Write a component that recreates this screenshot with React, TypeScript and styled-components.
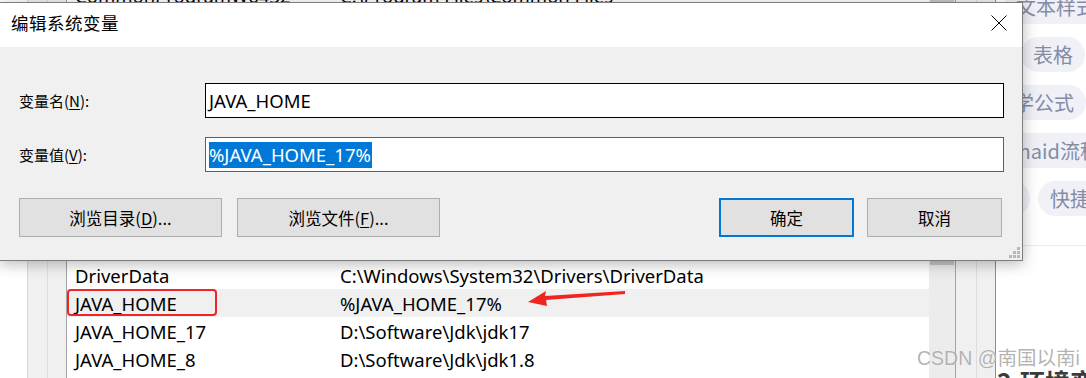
import React from "react";
import styled, { createGlobalStyle } from "styled-components";

const UI = `"Noto Sans", "Noto Sans CJK SC", sans-serif`;
const CJK = `"Noto Sans CJK SC", "Noto Sans", sans-serif`;

const GlobalStyle = createGlobalStyle`
  html, body { margin: 0; padding: 0; background: #ffffff; overflow: hidden; }
  body { font-family: ${UI}; }
  * { box-sizing: border-box; }
`;

const Screen = styled.div`
  position: relative;
  width: 1086px;
  height: 378px;
  overflow: hidden;
  display: flex;
  background: #ffffff;
`;

/* ---------- background window (environment variable list) ---------- */
const BackWindow = styled.div`
  flex: 0 0 996px;
  height: 100%;
  display: flex;
  background: #ffffff;
  border-right: 1px solid #8e8e8e;
`;

const Gutter = styled.div`
  flex: 0 0 27px;
  background: #ffffff;
`;

const FrameEdge = styled.div<{ $w: number; $line: string }>`
  flex: 0 0 ${(p) => p.$w}px;
  background: #f0f0f0;
  border-left: 1px solid ${(p) => p.$line};
`;

const ListBox = styled.div`
  flex: 0 0 863px;
  border-left: 1px solid #a3a3a3;
  background: #ffffff;
  display: flex;
  flex-direction: column;
  overflow: hidden;
`;

const ListRows = styled.div`
  margin-top: -19px;
  display: flex;
  flex-direction: column;
`;

const Row = styled.div<{ $active?: boolean }>`
  display: grid;
  grid-template-columns: 265px 1fr;
  height: 28px;
  align-items: center;
  background: ${(p) => (p.$active ? "#f0f0f0" : "transparent")};
  font-family: ${UI};
  font-size: 18.5px;
  color: #000;
  white-space: nowrap;
`;

const Cell = styled.div`
  position: relative;
  padding-left: 8px;
  height: 100%;
  display: flex;
  align-items: center;
`;

const RedBox = styled.div`
  position: absolute;
  left: 0;
  top: 0;
  width: 150px;
  height: 27px;
  border: 2px solid #f02424;
  border-radius: 4px;
`;

const Scrollbar = styled.div`
  flex: 0 0 26px;
  background: #ececec;
  display: flex;
  flex-direction: column;
`;

const Thumb = styled.div`
  height: 265px;
  margin: 0 1px;
  background: #c6c6c6;
`;

/* ---------- right CSDN sidebar ---------- */
const Sidebar = styled.div`
  flex: 1;
  display: flex;
  flex-direction: column;
  background: #ffffff;
  min-width: 0;
`;

const PillStack = styled.div`
  margin-top: -11px;
  display: flex;
  flex-direction: column;
  gap: 13px;
`;

const PillRow = styled.div<{ $overhang: number }>`
  display: flex;
  justify-content: flex-end;
  gap: 8px;
  height: 35px;
  margin-right: ${(p) => -p.$overhang}px;
`;

const Pill = styled.div`
  flex: 0 0 auto;
  height: 35px;
  padding: 0 12px;
  border-radius: 18px;
  background: #eff1f7;
  color: #858ba5;
  font-family: ${CJK};
  font-size: 20px;
  line-height: 35px;
  white-space: nowrap;
`;

const Divider = styled.div`
  margin-top: 29px;
  border-top: 1px solid #ececf0;
`;

const BottomTitle = styled.div`
  margin-top: auto;
  margin-bottom: -19px;
  padding-left: 1px;
  font-family: ${CJK};
  font-weight: 700;
  font-size: 25px;
  line-height: 32px;
  color: #3b3b3b;
  white-space: nowrap;
`;

/* ---------- overlays ---------- */
const Watermark = styled.div`
  position: absolute;
  left: 917px;
  top: 344px;
  font-family: "Liberation Sans", "Noto Sans CJK SC", sans-serif;
  font-size: 19.5px;
  line-height: 28px;
  color: rgba(150, 150, 150, 0.72);
  text-shadow: 0 0 1px rgba(255, 255, 255, 0.8);
  white-space: nowrap;
  z-index: 3;
`;

const Arrow = styled.svg`
  position: absolute;
  left: 524px;
  top: 284px;
  z-index: 1;
`;

/* ---------- dialog ---------- */
const Dialog = styled.div`
  position: absolute;
  left: -1px;
  top: 2px;
  width: 1024px;
  height: 259px;
  border: 1px solid #7d7d7d;
  background: #f0f0f0;
  box-shadow: 0 3px 14px rgba(0, 0, 0, 0.28);
  display: flex;
  flex-direction: column;
  z-index: 2;
`;

const TitleBar = styled.div`
  flex: 0 0 44px;
  background: #ffffff;
  display: flex;
  align-items: center;
  padding-left: 11px;
  padding-bottom: 5px;
`;

const Title = styled.div`
  font-family: ${CJK};
  font-size: 17.5px;
  color: #000;
  letter-spacing: 0.5px;
`;

const CloseButton = styled.div`
  margin-left: auto;
  width: 46px;
  height: 38px;
  display: flex;
  align-items: center;
  justify-content: center;
`;

const Body = styled.div`
  flex: 1;
  display: flex;
  flex-direction: column;
  padding: 36px 18px 0 19px;
`;

const FieldRow = styled.div<{ $gap: number }>`
  display: grid;
  grid-template-columns: 186px 1fr;
  align-items: center;
  height: 35px;
  margin-bottom: ${(p) => p.$gap}px;
`;

const Label = styled.div`
  font-family: ${CJK};
  font-size: 15px;
  color: #000;
`;

const Mnemonic = styled.span`
  text-decoration: underline;
  text-underline-offset: 2px;
`;

const TextBox = styled.div<{ $focused?: boolean }>`
  height: 35px;
  border: 1px solid ${(p) => (p.$focused ? "#0078d7" : "#000000")};
  background: #ffffff;
  padding: 0 3px;
  display: flex;
  align-items: center;
  font-family: ${UI};
  font-size: 18.5px;
  color: #000;
  white-space: nowrap;
`;

const Selection = styled.span`
  background: #0078d7;
  color: #ffffff;
  line-height: 26px;
  padding: 0 1px 0 0;
`;

const ButtonRow = styled.div`
  display: flex;
  gap: 15px;
  padding-right: 2px;
`;

const Button = styled.div<{ $w: number; $primary?: boolean; $push?: boolean }>`
  width: ${(p) => p.$w}px;
  height: 39px;
  margin-left: ${(p) => (p.$push ? "auto" : "0")};
  margin-right: ${(p) => (p.$primary ? "-2px" : "0")};
  background: #e1e1e1;
  border: ${(p) => (p.$primary ? "2px solid #0078d7" : "1px solid #adadad")};
  display: flex;
  align-items: center;
  justify-content: center;
  font-family: ${CJK};
  font-size: 16.5px;
  color: #000;
`;

const Grip = styled.svg`
  position: absolute;
  right: 2px;
  bottom: 2px;
`;

const rows: [string, string][] = [
  ["CommonProgramW6432", "C:\\Program Files\\Common Files"],
  ["ComSpec", "C:\\Windows\\system32\\cmd.exe"],
  ["configsetroot", "C:\\Windows\\ConfigSetRoot"],
  ["CUDA_PATH", "C:\\Program Files\\NVIDIA GPU Computing Toolkit\\CUDA"],
  ["CUDA_PATH_V11", "C:\\Program Files\\NVIDIA GPU Computing Toolkit\\CUDA\\v11"],
  ["DART_HOME", "D:\\Software\\dart-sdk"],
  ["DEV_HOME", "D:\\Software\\dev"],
  ["DOCKER_HOME", "D:\\Software\\Docker"],
  ["DOTNET_ROOT", "C:\\Program Files\\dotnet"],
  ["DRIVER_HOME", "C:\\Windows\\System32\\Drivers"],
  ["DriverData", "C:\\Windows\\System32\\Drivers\\DriverData"],
  ["JAVA_HOME", "%JAVA_HOME_17%"],
  ["JAVA_HOME_17", "D:\\Software\\Jdk\\jdk17"],
  ["JAVA_HOME_8", "D:\\Software\\Jdk\\jdk1.8"],
];

export default function App() {
  return (
    <>
      <GlobalStyle />
      <Screen>
        <BackWindow>
          <Gutter />
          <FrameEdge $w={20} $line="#d6d6d6" />
          <FrameEdge $w={19} $line="#dedede" />
          <ListBox>
            <ListRows>
              {rows.map(([name, value]) => {
                const active = name === "JAVA_HOME";
                return (
                  <Row key={name} $active={active}>
                    <Cell>
                      {active && <RedBox />}
                      {name}
                    </Cell>
                    <Cell>{value}</Cell>
                  </Row>
                );
              })}
            </ListRows>
          </ListBox>
          <Scrollbar>
            <Thumb />
          </Scrollbar>
          <FrameEdge $w={21} $line="#a3a3a3" />
          <FrameEdge $w={19} $line="#dcdcdc" />
        </BackWindow>

        <Sidebar>
          <PillStack>
            <PillRow $overhang={22}>
              <Pill>文本样式</Pill>
            </PillRow>
            <PillRow $overhang={-1}>
              <Pill>表格</Pill>
            </PillRow>
            <PillRow $overhang={0}>
              <Pill>数学公式</Pill>
            </PillRow>
            <PillRow $overhang={46}>
              <Pill>mermaid流程图</Pill>
            </PillRow>
            <PillRow $overhang={36}>
              <Pill>图片</Pill>
              <Pill>快捷键</Pill>
            </PillRow>
          </PillStack>
          <Divider />
          <BottomTitle>2.环境变量</BottomTitle>
        </Sidebar>

        <Arrow width="106" height="24" viewBox="0 0 106 24">
          <polygon
            points="4,18 22,7 21,12 101,7 101,10 22,16 23,22"
            fill="#f0261e"
          />
        </Arrow>

        <Watermark>CSDN @南国以南i</Watermark>

        <Dialog>
          <TitleBar>
            <Title>编辑系统变量</Title>
            <CloseButton>
              <svg width="16" height="16" viewBox="0 0 16 16">
                <path d="M0.5 0.5 L15.5 15.5 M15.5 0.5 L0.5 15.5" stroke="#000" strokeWidth="1" />
              </svg>
            </CloseButton>
          </TitleBar>
          <Body>
            <FieldRow $gap={19}>
              <Label>
                变量名(<Mnemonic>N</Mnemonic>):
              </Label>
              <TextBox>JAVA_HOME</TextBox>
            </FieldRow>
            <FieldRow $gap={26}>
              <Label>
                变量值(<Mnemonic>V</Mnemonic>):
              </Label>
              <TextBox $focused>
                <Selection>%JAVA_HOME_17%</Selection>
              </TextBox>
            </FieldRow>
            <ButtonRow>
              <Button $w={203}>
                浏览目录(<Mnemonic>D</Mnemonic>)...
              </Button>
              <Button $w={203}>
                浏览文件(<Mnemonic>F</Mnemonic>)...
              </Button>
              <Button $w={135} $primary $push>
                确定
              </Button>
              <Button $w={135}>取消</Button>
            </ButtonRow>
          </Body>
          <Grip width="11" height="11" viewBox="0 0 11 11">
            <rect x="8" y="0" width="3" height="3" fill="#b8b8b8" />
            <rect x="4" y="4" width="3" height="3" fill="#b8b8b8" />
            <rect x="8" y="4" width="3" height="3" fill="#b8b8b8" />
            <rect x="0" y="8" width="3" height="3" fill="#b8b8b8" />
            <rect x="4" y="8" width="3" height="3" fill="#b8b8b8" />
            <rect x="8" y="8" width="3" height="3" fill="#b8b8b8" />
          </Grip>
        </Dialog>
      </Screen>
    </>
  );
}
